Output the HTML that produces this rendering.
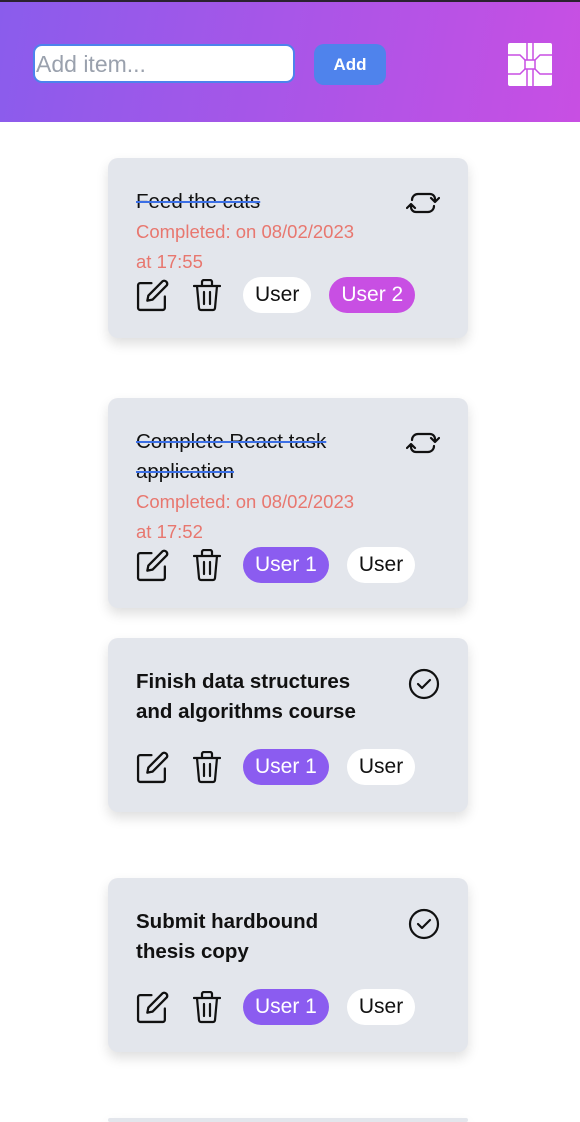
<!DOCTYPE html><html><head><style>
*{margin:0;padding:0;box-sizing:border-box}
html,body{width:580px;height:1122px;overflow:hidden}
body{background:#fff;font-family:"Liberation Sans",Helvetica,Arial,sans-serif;position:relative}
.hdr{position:absolute;left:0;top:0;width:580px;height:122px;background:linear-gradient(100deg,#8a5cec,#c84fe3);border-top:2px solid #2a2230}
.inp{position:absolute;left:33px;top:42px;width:262px;height:39px;background:#fff;border:2px solid #4d83ec;border-radius:9px;font-size:23px;color:#9aa1ad;padding:4px 1px;line-height:28px}
.btn{position:absolute;left:314px;top:42px;width:72px;height:41px;background:#4f83ec;border-radius:10px;color:#fff;font-weight:bold;font-size:17px;text-align:center;line-height:41px}
.logo{position:absolute;left:508px;top:41px}
.card{position:absolute;left:108px;width:360px;background:#e3e6ec;border-radius:10px;box-shadow:0 6px 12px rgba(0,0,0,.13);padding:29px 28px 0}
.t{font-size:20.5px;font-weight:bold;line-height:30px;color:#111;width:230px}
.s{text-decoration:line-through;text-decoration-color:#3b6fe6;font-weight:normal;font-size:20.5px}
.c{font-size:18.5px;line-height:30px;color:#e8776f}
.row{display:flex;align-items:center;height:36px}
.pill{height:36px;border-radius:18px;font-size:21px;line-height:36px;padding:0 12px;color:#111;background:#fff}
.u1{background:#8b5cf0;color:#fff}.u2{background:#c84fe3;color:#fff}
.ri{position:absolute;left:298px;top:29px}
</style></head><body>
<div class="hdr">
<div class="inp">Add item...</div>
<div class="btn">Add</div>
<svg class="logo" width="44" height="43" viewBox="0 0 44 43"><rect x="0" y="0" width="44" height="43" rx="2" fill="#fff"/><g stroke="#c84fe3" stroke-width="1.5" fill="none"><rect x="17" y="17" width="10" height="9"/><path d="M0 12H12L17 17M44 12H32L27 17M0 31H12L17 26M44 31H32L27 26M19 0V17M25 0V17M19 26V43M25 26V43"/></g></svg>
</div>

<svg width="0" height="0" style="position:absolute"><defs>
<g id="ed" fill="none" stroke="#111" stroke-width="2.2" stroke-linecap="round" stroke-linejoin="round"><path d="M15 5H4a2 2 0 0 0-2 2v22a2 2 0 0 0 2 2h22a2 2 0 0 0 2-2V18"/><path d="M26 3a3 3 0 0 1 4 4L16 21l-5 1 1-5z"/></g>
<g id="tr" fill="none" stroke="#111" stroke-width="2.2" stroke-linecap="round" stroke-linejoin="round"><path d="M1 7h26M9 7V3a2 2 0 0 1 2-2h6a2 2 0 0 1 2 2v4M4 7l2 22a2 2 0 0 0 2 2h12a2 2 0 0 0 2-2l2-22M11 13v12M17 13v12"/></g>
<g id="rp" fill="none" stroke="#111" stroke-width="2.2" stroke-linecap="round" stroke-linejoin="round"><path d="M6 13a6 6 0 0 1 6-6h12a5 5 0 0 1 5 5v2M25 11l4 4 4-4M28 19a6 6 0 0 1-6 6H10a5 5 0 0 1-5-5v-2M9 21l-4-4-4 4"/></g>
<g id="ck" fill="none" stroke="#111" stroke-width="2.2" stroke-linecap="round" stroke-linejoin="round"><circle cx="16" cy="16" r="14"/><path d="M10 16l4 4 8-8"/></g>
</defs></svg>

<div class="card" style="top:158px;height:180px">
<div class="t s">Feed the cats</div>
<div class="c">Completed: on 08/02/2023<br>at 17:55</div>
<div class="row"><svg width="34" height="34" viewBox="0 0 33 33"><use href="#ed"/></svg><svg style="margin-left:23px" width="28" height="33" viewBox="0 0 28 33"><use href="#tr"/></svg><div class="pill" style="margin-left:22px">User</div><div class="pill u2" style="margin-left:18px">User 2</div></div>
<svg class="ri" width="34" height="32" viewBox="0 0 34 32"><use href="#rp"/></svg>
</div>

<div class="card" style="top:398px;height:210px">
<div class="t s">Complete React task application</div>
<div class="c">Completed: on 08/02/2023<br>at 17:52</div>
<div class="row"><svg width="34" height="34" viewBox="0 0 33 33"><use href="#ed"/></svg><svg style="margin-left:23px" width="28" height="33" viewBox="0 0 28 33"><use href="#tr"/></svg><div class="pill u1" style="margin-left:22px">User 1</div><div class="pill" style="margin-left:18px">User</div></div>
<svg class="ri" width="34" height="32" viewBox="0 0 34 32"><use href="#rp"/></svg>
</div>

<div class="card" style="top:638px;height:174px">
<div class="t">Finish data structures and algorithms course</div>
<div class="row" style="margin-top:22px"><svg width="34" height="34" viewBox="0 0 33 33"><use href="#ed"/></svg><svg style="margin-left:23px" width="28" height="33" viewBox="0 0 28 33"><use href="#tr"/></svg><div class="pill u1" style="margin-left:22px">User 1</div><div class="pill" style="margin-left:18px">User</div></div>
<svg class="ri" style="left:300px;top:30px" width="32" height="32" viewBox="0 0 32 32"><use href="#ck"/></svg>
</div>

<div class="card" style="top:878px;height:174px">
<div class="t">Submit hardbound thesis copy</div>
<div class="row" style="margin-top:22px"><svg width="34" height="34" viewBox="0 0 33 33"><use href="#ed"/></svg><svg style="margin-left:23px" width="28" height="33" viewBox="0 0 28 33"><use href="#tr"/></svg><div class="pill u1" style="margin-left:22px">User 1</div><div class="pill" style="margin-left:18px">User</div></div>
<svg class="ri" style="left:300px;top:30px" width="32" height="32" viewBox="0 0 32 32"><use href="#ck"/></svg>
</div>

<div class="card" style="top:1118px;height:4px;padding:0"></div>
</body></html>
